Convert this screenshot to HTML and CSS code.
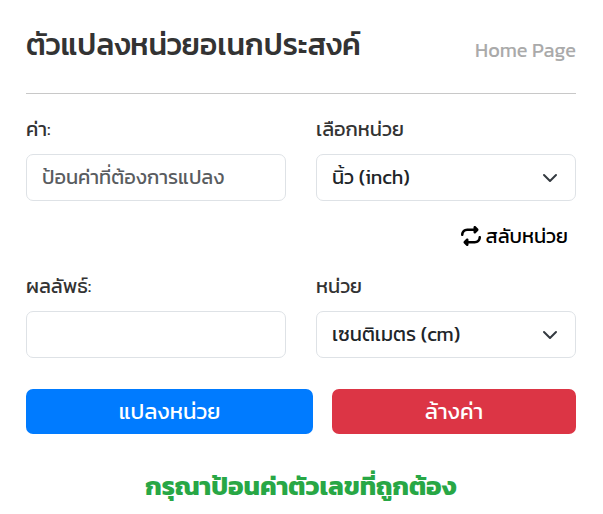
FILE: index.html
```
<!DOCTYPE html>
<html lang="th">
<head>
    <meta charset="UTF-8">
    <meta name="viewport" content="width=device-width, initial-scale=1.0">
    <title>ตัวแปลงหน่วยอเนกประสงค์</title>
    <link rel="stylesheet" href="styles.css">
</head>
<body>
    <div class="container">
        <div class="header">
            <h1>ตัวแปลงหน่วยอเนกประสงค์</h1>
            <a class="home-link" href="#">Home Page</a>
        </div>
        <hr>
        <div class="row">
            <div class="field">
                <label for="inputValue">ค่า:</label>
                <input type="text" id="inputValue" class="control" placeholder="ป้อนค่าที่ต้องการแปลง">
            </div>
            <div class="field">
                <label for="fromUnit">เลือกหน่วย</label>
                <select id="fromUnit" class="control">
                    <option value="inch" selected>นิ้ว (inch)</option>
                    <option value="cm">เซนติเมตร (cm)</option>
                </select>
            </div>
        </div>

        <div class="swap">
            <button type="button" class="btn-swap" onclick="swapUnits()">
                <svg class="icon" viewBox="0 0 512 512" aria-hidden="true">
                    <path fill="currentColor" d="M0 224c0 17.700 14.300 32 32 32s32-14.300 32-32c0-53 43-96 96-96H320v32c0 12.900 7.800 24.600 19.800 29.600s25.700 2.200 34.900-6.900l64-64c12.500-12.500 12.500-32.800 0-45.300l-64-64c-9.200-9.200-22.900-11.900-34.900-6.900S320 19.100 320 32V64H160C71.600 64 0 135.600 0 224zm512 64c0-17.700-14.300-32-32-32s-32 14.300-32 32c0 53-43 96-96 96H192V352c0-12.900-7.800-24.600-19.800-29.600s-25.700-2.200-34.900 6.900l-64 64c-12.500 12.500-12.500 32.800 0 45.300l64 64c9.200 9.200 22.900 11.900 34.900 6.900s19.800-16.600 19.800-29.600V448H352c88.400 0 160-71.600 160-160z"/>
                </svg>
                <span>สลับหน่วย</span>
            </button>
        </div>

        <div class="row">
            <div class="field">
                <label for="outputValue">ผลลัพธ์:</label>
                <input type="text" id="outputValue" class="control" readonly>
            </div>
            <div class="field">
                <label for="toUnit">หน่วย</label>
                <select id="toUnit" class="control">
                    <option value="inch">นิ้ว (inch)</option>
                    <option value="cm" selected>เซนติเมตร (cm)</option>
                </select>
            </div>
        </div>

        <div class="actions">
            <button type="button" class="btn btn-convert" onclick="convert()">แปลงหน่วย</button>
            <button type="button" class="btn btn-clear" onclick="clearValues()">ล้างค่า</button>
        </div>

        <div class="result" id="result">กรุณาป้อนค่าตัวเลขที่ถูกต้อง</div>
    </div>

    <script>
        const input = document.getElementById('inputValue');
        const output = document.getElementById('outputValue');
        const fromUnit = document.getElementById('fromUnit');
        const toUnit = document.getElementById('toUnit');
        const result = document.getElementById('result');

        // centimetres in one unit
        const factors = { inch: 2.54, cm: 1 };

        function convert() {
            const value = parseFloat(input.value);
            if (isNaN(value)) {
                output.value = '';
                result.innerText = 'กรุณาป้อนค่าตัวเลขที่ถูกต้อง';
                return;
            }
            output.value = value * factors[fromUnit.value] / factors[toUnit.value];
            result.innerText = '';
        }

        function swapUnits() {
            const unit = fromUnit.value;
            fromUnit.value = toUnit.value;
            toUnit.value = unit;
        }

        function clearValues() {
            input.value = '';
            output.value = '';
            result.innerText = '';
        }
    </script>
</body>
</html>
```
FILE: styles.css
```
* {
    box-sizing: border-box;
}
body {
    margin: 0;
    background: #ffffff;
    color: #333333;
    font-family: Kanit, "Noto Sans Thai", "Noto Sans", sans-serif;
    font-size: 20px;
    line-height: 30px;
}
.container {
    padding: 24px 27px 0 26px;
}
.header {
    display: flex;
    justify-content: space-between;
    align-items: flex-end;
}
h1 {
    margin: 0;
    font-size: 30px;
    font-weight: 500;
    line-height: 42px;
    white-space: nowrap;
}
.home-link {
    color: #aaaaaa;
    line-height: 32px;
    text-decoration: none;
    white-space: nowrap;
}
hr {
    margin: 27px 0 20px;
    border: 0;
    border-top: 1px solid #c8c8c8;
}
.row {
    display: grid;
    grid-template-columns: 1fr 1fr;
    gap: 30px;
}
.field label {
    display: block;
    margin-bottom: 10px;
}
.control {
    display: block;
    width: 100%;
    height: 47px;
    padding: 6px 15px 8px;
    border: 1px solid #dee2e6;
    border-radius: 7px;
    background-color: #ffffff;
    color: #212529;
    font: inherit;
}
.control::placeholder {
    color: #595c5f;
    opacity: 1;
}
select.control {
    appearance: none;
    background-image: url("data:image/svg+xml,%3csvg xmlns='http://www.w3.org/2000/svg' viewBox='0 0 16 16'%3e%3cpath fill='none' stroke='%23343a40' stroke-linecap='round' stroke-linejoin='round' stroke-width='2' d='m2 5 6 6 6-6'/%3e%3c/svg%3e");
    background-repeat: no-repeat;
    background-position: right 17px center;
    background-size: 16px 16px;
}
.swap {
    display: flex;
    justify-content: flex-end;
    margin: 20px 0;
}
.btn-swap {
    display: flex;
    align-items: center;
    gap: 4px;
    padding: 0 8px;
    border: 0;
    background: none;
    color: #000000;
    font: inherit;
    cursor: pointer;
}
.icon {
    width: 20px;
    height: 20px;
}
.actions {
    display: grid;
    grid-template-columns: 287fr 244fr;
    gap: 19px;
    margin-top: 31px;
}
.btn {
    height: 45px;
    padding: 0;
    border: 0;
    border-radius: 7px;
    color: #ffffff;
    font: inherit;
    font-size: 22px;
    cursor: pointer;
}
.btn-convert {
    background-color: #007bff;
}
.btn-clear {
    background-color: #dc3545;
}
.result {
    margin-top: 37px;
    color: #28a745;
    font-size: 26px;
    font-weight: 700;
    text-align: center;
}
```
